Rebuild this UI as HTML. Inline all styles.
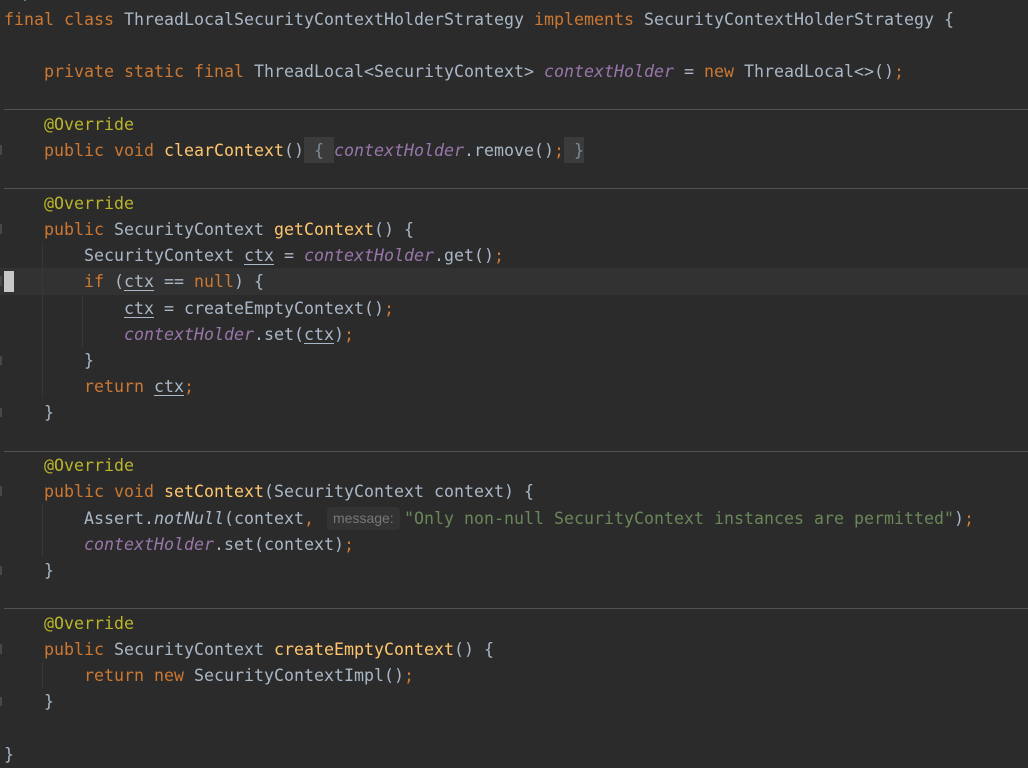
<!DOCTYPE html>
<html><head><meta charset="utf-8">
<style>
html,body{margin:0;padding:0;background:#2b2b2b;width:1028px;height:768px;overflow:hidden}
#e{position:relative;width:1028px;height:768px;overflow:hidden;font-family:"DejaVu Sans Mono","Liberation Mono",monospace;font-size:16.63px;color:#a9b7c6}
.l{position:absolute;left:4px;margin-top:1px;height:26px;line-height:26px;white-space:pre}
.k{color:#cc7832}.f{color:#9876aa;font-style:italic}.m{color:#ffc66d}.a{color:#bbb529}.s{color:#6a8759}.i{font-style:italic}
.u{text-decoration:underline;text-underline-offset:3px;text-decoration-thickness:1px}
.b{position:absolute}
.d{color:#7f8b96}
</style></head><body><div id="e">
<div class="b" style="left:0;top:268px;width:1028px;height:27px;background:#323232"></div>
<div class="b" style="left:4px;top:271px;width:10px;height:21px;background:#c8c8c8"></div>
<div class="b" style="left:24px;top:0;width:2px;height:1px;background:#4f9a4f"></div>

<div class="b" style="left:4px;top:109px;width:1024px;height:1px;background:#515151"></div>
<div class="b" style="left:4px;top:188px;width:1024px;height:1px;background:#515151"></div>
<div class="b" style="left:4px;top:451px;width:1024px;height:1px;background:#515151"></div>
<div class="b" style="left:4px;top:608px;width:1024px;height:1px;background:#515151"></div>

<div class="b" style="left:304px;top:137px;width:30px;height:26px;background:#3b3b3b"></div>
<div class="b" style="left:564px;top:137px;width:20px;height:26px;background:#3b3b3b"></div>
<div class="b" style="left:327px;top:507px;width:73px;height:23px;border-radius:4px;background:#333333"></div>

<div class="b" style="left:42px;top:242px;width:1px;height:156px;background:#373737"></div>
<div class="b" style="left:82px;top:295px;width:1px;height:52px;background:#373737"></div>
<div class="b" style="left:42px;top:504px;width:1px;height:53px;background:#373737"></div>
<div class="b" style="left:42px;top:662px;width:1px;height:26px;background:#373737"></div>

<div class="b" style="left:0;top:145px;width:2px;height:10px;background:#484848"></div>
<div class="b" style="left:0;top:224px;width:2px;height:10px;background:#484848"></div>
<div class="b" style="left:0;top:276px;width:2px;height:10px;background:#484848"></div>
<div class="b" style="left:0;top:356px;width:2px;height:9px;background:#484848"></div>
<div class="b" style="left:0;top:408px;width:2px;height:9px;background:#484848"></div>
<div class="b" style="left:0;top:486px;width:2px;height:10px;background:#484848"></div>
<div class="b" style="left:0;top:566px;width:2px;height:9px;background:#484848"></div>
<div class="b" style="left:0;top:644px;width:2px;height:10px;background:#484848"></div>
<div class="b" style="left:0;top:697px;width:2px;height:9px;background:#484848"></div>

<div class="l" style="top:6px"><span class="k">final class </span>ThreadLocalSecurityContextHolderStrategy <span class="k">implements </span>SecurityContextHolderStrategy {</div>
<div class="l" style="top:58px">    <span class="k">private static final </span>ThreadLocal&lt;SecurityContext&gt; <span class="f">contextHolder</span> = <span class="k">new </span>ThreadLocal&lt;&gt;()<span class="k">;</span></div>
<div class="l a" style="top:111px">    @Override</div>
<div class="l" style="top:137px">    <span class="k">public void </span><span class="m">clearContext</span>()<span class="d"> {</span> <span class="f">contextHolder</span>.remove()<span class="k">;</span><span class="d"> }</span></div>
<div class="l a" style="top:190px">    @Override</div>
<div class="l" style="top:216px">    <span class="k">public </span>SecurityContext <span class="m">getContext</span>() {</div>
<div class="l" style="top:242px">        SecurityContext <span class="u">ctx</span> = <span class="f">contextHolder</span>.get()<span class="k">;</span></div>
<div class="l" style="top:268px">        <span class="k">if </span>(<span class="u">ctx</span> == <span class="k">null</span>) {</div>
<div class="l" style="top:295px">            <span class="u">ctx</span> = createEmptyContext()<span class="k">;</span></div>
<div class="l" style="top:321px">            <span class="f">contextHolder</span>.set(<span class="u">ctx</span>)<span class="k">;</span></div>
<div class="l" style="top:347px">        }</div>
<div class="l" style="top:373px">        <span class="k">return </span><span class="u">ctx</span><span class="k">;</span></div>
<div class="l" style="top:399px">    }</div>
<div class="l a" style="top:452px">    @Override</div>
<div class="l" style="top:478px">    <span class="k">public void </span><span class="m">setContext</span>(SecurityContext context) {</div>
<div class="l" style="top:505px">        Assert.<span class="i">notNull</span>(context<span class="k">,</span></div>
<div class="b" style="left:333px;top:507px;height:23px;line-height:23px;font-family:'Liberation Sans',sans-serif;font-size:14px;color:#787878;white-space:pre">message:</div>
<div class="l" style="top:505px;left:404px"><span class="s">"Only non-null SecurityContext instances are permitted"</span>)<span class="k">;</span></div>
<div class="l" style="top:531px">        <span class="f">contextHolder</span>.set(context)<span class="k">;</span></div>
<div class="l" style="top:557px">    }</div>
<div class="l a" style="top:610px">    @Override</div>
<div class="l" style="top:636px">    <span class="k">public </span>SecurityContext <span class="m">createEmptyContext</span>() {</div>
<div class="l" style="top:662px">        <span class="k">return new </span>SecurityContextImpl()<span class="k">;</span></div>
<div class="l" style="top:688px">    }</div>
<div class="l" style="top:741px">}</div>
</div></body></html>
